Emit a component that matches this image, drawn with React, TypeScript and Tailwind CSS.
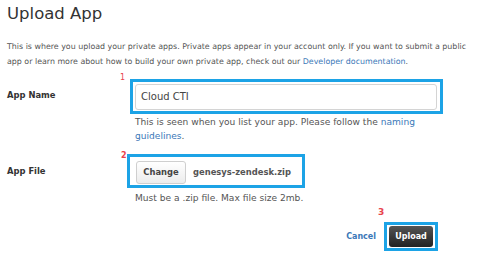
export default function App() {
  return (
    <div className="w-[500px] h-[254px] bg-white overflow-hidden px-[7px] text-[#555] [font-family:'DejaVu_Sans',Verdana,sans-serif]">
      <h1 className="pt-[2px] text-[16.5px] leading-[24px] text-[#333]">Upload App</h1>

      <p className="mt-[13px] whitespace-nowrap text-[7.9px] leading-[15px]">
        This is where you upload your private apps. Private apps appear in your account only. If you want to submit a public
        <br />
        app or learn more about how to build your own private app, check out our{" "}
        <span className="text-[#3b78b8]">Developer documentation</span>.
      </p>

      {/* App name */}
      <div className="mt-[10px] flex">
        <div className="w-[123px] shrink-0 pt-[10px] text-[8.4px] font-bold text-[#333]">App Name</div>
        <div className="flex-1">
          <div className="relative w-[313px] border-[3px] border-[#1ca3e6] pl-[2px] pr-[3px] pt-[2px] pb-[1px]">
            <span className="absolute -left-[13px] -top-[9px] text-[8px] leading-[10px] text-[#e8434d]">1</span>
            <div className="h-[26px] rounded-[3px] border border-[#d4d4d4] px-[5px] text-[10px] leading-[24px] text-[#444]">
              Cloud CTI
            </div>
          </div>
          <div className="mt-[1px] pl-[5px] text-[9.1px] leading-[14px]">
            This is seen when you list your app. Please follow the <span className="text-[#3b78b8]">naming</span>
            <br />
            <span className="text-[#3b78b8]">guidelines</span>.
          </div>
        </div>
      </div>

      {/* App file */}
      <div className="mt-[11px] flex">
        <div className="w-[120px] shrink-0 pt-[11px] text-[8.4px] font-bold text-[#333]">App File</div>
        <div className="flex-1">
          <div className="relative inline-flex items-center gap-[7px] border-[3px] border-[#1ca3e6] pl-[6px] pr-[11px] pt-[4px] pb-[1px]">
            <span className="absolute -left-[9px] -top-[6px] text-[8px] leading-[10px] font-bold text-[#e8434d]">2</span>
            <div className="h-[23px] w-[50px] rounded-[3px] border border-[#cfcfcf] bg-gradient-to-b from-white to-[#ececec] text-center text-[8.4px] font-bold leading-[21px] text-[#444]">
              Change
            </div>
            <span className="text-[8.4px] font-bold text-[#555]">genesys-zendesk.zip</span>
          </div>
          <div className="mt-[3px] pl-[8px] text-[9.1px] leading-[14px]">Must be a .zip file. Max file size 2mb.</div>
        </div>
      </div>

      {/* Actions */}
      <div className="mt-[17px] flex items-center justify-end gap-[8px] pr-[55px]">
        <span className="text-[8px] font-bold text-[#3b78b8]">Cancel</span>
        <div className="relative border-[3px] border-[#1ca3e6] px-[2px] py-[1px]">
          <span className="absolute -left-[9px] -top-[18px] text-[9px] leading-[10px] font-bold text-[#e8434d]">3</span>
          <div className="h-[21px] w-[44px] rounded-[3px] bg-gradient-to-b from-[#555] to-[#222] text-center text-[8px] font-bold leading-[21px] text-white">
            Upload
          </div>
        </div>
      </div>
    </div>
  );
}
